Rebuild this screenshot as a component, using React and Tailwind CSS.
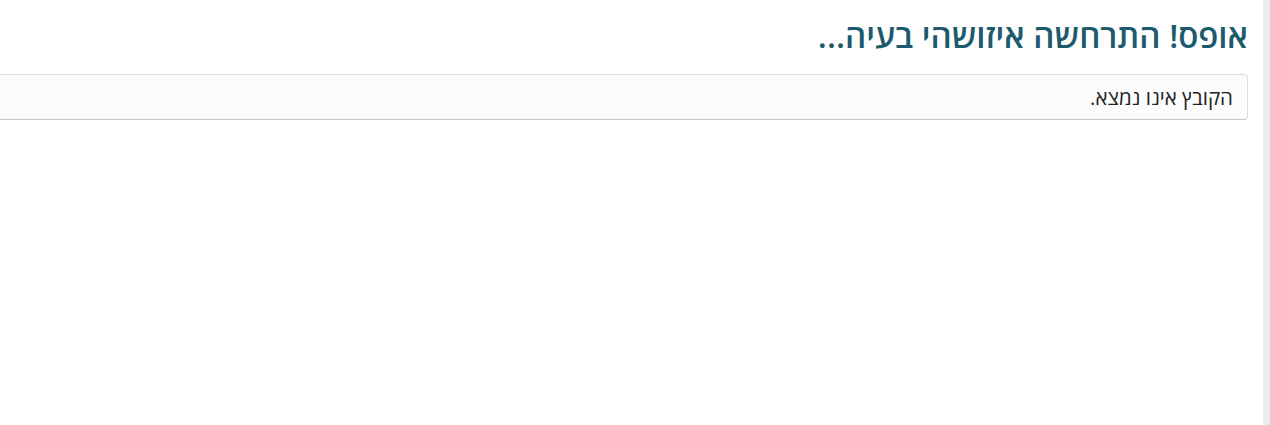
import React from 'react';

export default function App() {
  return (
    <div dir="rtl" className="flex h-[425px] w-full bg-white" style={{ fontFamily: '"Open Sans", "Noto Sans", sans-serif' }}>
      <div className="w-[7px] shrink-0 bg-[#ececec]" />
      <div className="flex-1 overflow-hidden">
        <div className="-ml-8 pr-[15px] pt-[14px]">
          <h1 className="text-[33px] leading-[44px] font-semibold text-[#1d5a6e]">
            אופס! התרחשה איזושהי בעיה...
          </h1>
          <div className="mt-[16px] rounded-[4px] border border-[#dcdcdc] border-b-[#c6c6c6] bg-[#fcfcfc] px-[14px] py-[9px] text-[20.5px] leading-[26px] text-[#222]">
            הקובץ אינו נמצא.
          </div>
        </div>
      </div>
    </div>
  );
}
